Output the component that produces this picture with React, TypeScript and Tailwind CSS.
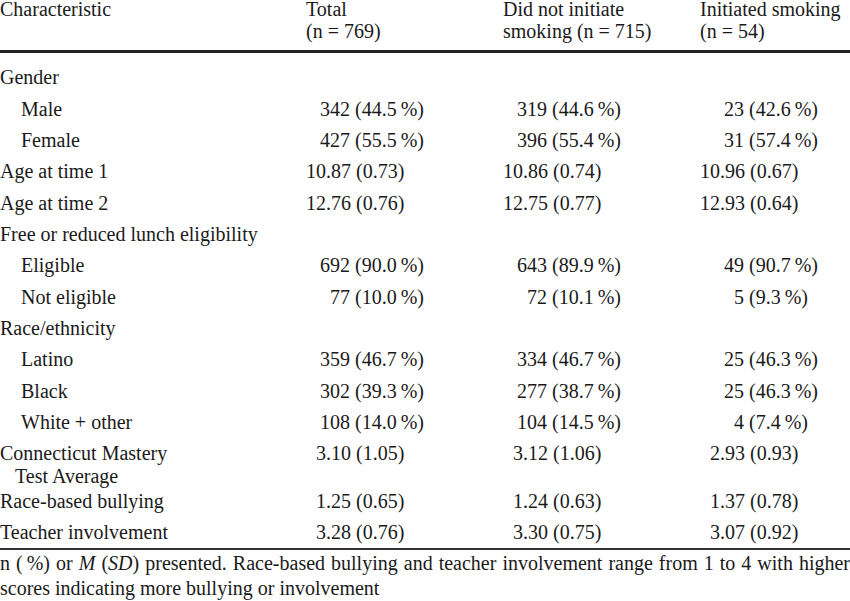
import React from "react";

type Cell =
  | { kind: "count"; n: string; rest: string }
  | { kind: "mean"; n: string; rest: string }
  | null;

const c = (s: string): Cell => {
  const i = s.indexOf(" ");
  return { kind: "count", n: s.slice(0, i), rest: s.slice(i).replace(" %", "\u2009%") };
};
const m = (s: string): Cell => {
  const i = s.indexOf(".");
  return { kind: "mean", n: s.slice(0, i), rest: s.slice(i) };
};

type Row = { label: React.ReactNode; indent?: boolean; cells: Cell[]; tall?: boolean };

const rows: Row[] = [
  { label: "Gender", cells: [null, null, null] },
  { label: "Male", indent: true, cells: [c("342 (44.5 %)"), c("319 (44.6 %)"), c("23 (42.6 %)")] },
  { label: "Female", indent: true, cells: [c("427 (55.5 %)"), c("396 (55.4 %)"), c("31 (57.4 %)")] },
  { label: "Age at time 1", cells: [m("10.87 (0.73)"), m("10.86 (0.74)"), m("10.96 (0.67)")] },
  { label: "Age at time 2", cells: [m("12.76 (0.76)"), m("12.75 (0.77)"), m("12.93 (0.64)")] },
  { label: "Free or reduced lunch eligibility", cells: [null, null, null] },
  { label: "Eligible", indent: true, cells: [c("692 (90.0 %)"), c("643 (89.9 %)"), c("49 (90.7 %)")] },
  { label: "Not eligible", indent: true, cells: [c("77 (10.0 %)"), c("72 (10.1 %)"), c("5 (9.3 %)")] },
  { label: "Race/ethnicity", cells: [null, null, null] },
  { label: "Latino", indent: true, cells: [c("359 (46.7 %)"), c("334 (46.7 %)"), c("25 (46.3 %)")] },
  { label: "Black", indent: true, cells: [c("302 (39.3 %)"), c("277 (38.7 %)"), c("25 (46.3 %)")] },
  { label: "White + other", indent: true, cells: [c("108 (14.0 %)"), c("104 (14.5 %)"), c("4 (7.4 %)")] },
  {
    label: (
      <>
        <div>Connecticut Mastery</div>
        <div className="pl-[15px]">Test Average</div>
      </>
    ),
    tall: true,
    cells: [m("3.10 (1.05)"), m("3.12 (1.06)"), m("2.93 (0.93)")],
  },
  { label: "Race-based bullying", cells: [m("1.25 (0.65)"), m("1.24 (0.63)"), m("1.37 (0.78)")] },
  { label: "Teacher involvement", cells: [m("3.28 (0.76)"), m("3.30 (0.75)"), m("3.07 (0.92)")] },
];

function CellView({ cell, last }: { cell: Cell; last: boolean }) {
  const box = last ? "flex-1 min-w-0 whitespace-pre" : "w-[197px] shrink-0 whitespace-pre";
  if (!cell) return <div className={box} />;
  return (
    <div className={box}>
      <span
        className={
          cell.kind === "count"
            ? "inline-block w-[44px] text-right"
            : "inline-block w-[20px] text-right"
        }
      >
        {cell.n}
      </span>
      {cell.rest}
    </div>
  );
}

export default function App() {
  return (
    <div className="w-[850px] h-[601px] overflow-hidden bg-white text-[#1a1a1a] font-['Liberation_Serif',serif] text-[20px]">
      {/* header */}
      <div className="flex leading-[22px] -mt-[2px] h-[52px]">
        <div className="w-[306px] shrink-0">Characteristic</div>
        <div className="w-[197px] shrink-0">
          <div>Total</div>
          <div>(n = 769)</div>
        </div>
        <div className="w-[197px] shrink-0">
          <div>Did not initiate</div>
          <div>smoking (n = 715)</div>
        </div>
        <div className="flex-1 min-w-0 whitespace-nowrap">
          <div>Initiated smoking</div>
          <div>(n = 54)</div>
        </div>
      </div>
      <div className="h-[3px] bg-[#222]" />
      <div className="pt-[9.3px]">
        {rows.map((r, i) =>
          r.tall ? (
            <div key={i} className="flex h-[47.6px] pt-[4.2px] leading-[23px]">
              <div className="w-[306px] shrink-0">{r.label}</div>
              {r.cells.map((cell, j) => (
                <CellView key={j} cell={cell} last={j === 2} />
              ))}
            </div>
          ) : (
            <div key={i} className="flex h-[31.33px] items-center leading-[31.33px]">
              <div className={r.indent ? "w-[306px] shrink-0 pl-[21px]" : "w-[306px] shrink-0"}>{r.label}</div>
              {r.cells.map((cell, j) => (
                <CellView key={j} cell={cell} last={j === 2} />
              ))}
            </div>
          )
        )}
      </div>
      <div className="h-[2px] bg-[#333]" />
      <div className="pt-[1px] leading-[25px] text-justify">
        n ({"\u2009"}%) or <i>M</i> (<i>SD</i>) presented. Race-based bullying and teacher involvement range from 1 to 4 with higher scores indicating more bullying or involvement
      </div>
    </div>
  );
}
